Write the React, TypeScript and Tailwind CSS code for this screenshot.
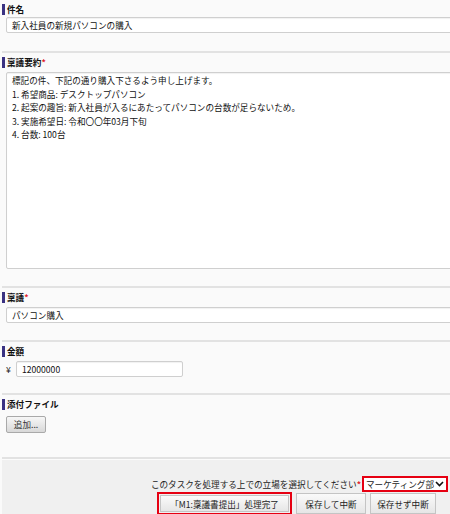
import React from 'react';

const font = { fontFamily: '"Noto Sans CJK JP", "Noto Sans", sans-serif' };

const Label = ({ text, required }: { text: string; required?: boolean }) => (
  <div className="flex items-center h-[12px]">
    <span className="w-[3px] h-[11px] bg-[#3a3282]" />
    <span className="ml-[2px] text-[8.6px] font-bold text-[#111] leading-[12px]">{text}</span>
    {required && <span className="text-[8.6px] font-bold text-[#e0202a] leading-[12px]">*</span>}
  </div>
);

const Section = ({ children, pb }: { children: React.ReactNode; pb: string }) => (
  <div className={`bg-[#fafafa] border-b-2 border-[#e2e2e2] pt-[3px] ${pb}`}>{children}</div>
);

const inputCls =
  'h-[16px] border border-[#cfcfcf] rounded-[2px] bg-white px-[5px] text-[8.6px] leading-[14px] text-[#111] shadow-[inset_0_1px_1px_rgba(0,0,0,0.06)]';

const body = [
  '標記の件、下記の通り購入下さるよう申し上げます。',
  '1. 希望商品: デスクトップパソコン',
  '2. 起案の趣旨: 新入社員が入るにあたってパソコンの台数が足らないため。',
  '3. 実施希望日: 令和〇〇年03月下旬',
  '4. 台数: 100台',
];

const btnCls =
  'flex items-center justify-center border border-[#c4c4c4] bg-gradient-to-b from-[#fafafa] to-[#e6e6e6] text-[8.6px] text-[#222] leading-[12px] whitespace-nowrap';

export default function App() {
  return (
    <div className="w-[450px] h-[514px] overflow-hidden bg-[#fafafa] pl-[2px] flex flex-col" style={font}>
      <Section pb="pb-[18px]">
        <Label text="件名" />
        <div className="flex pl-[4px] pt-[2px]">
          <div className={`${inputCls} w-[460px] shrink-0`}>新入社員の新規パソコンの購入</div>
        </div>
      </Section>

      <Section pb="pb-[17px]">
        <Label text="稟議要約" required />
        <div className="flex pl-[4px] pt-[4px]">
          <div className={`${inputCls} w-[460px] shrink-0 h-[197px] pt-[1px]`}>
            {body.map((l) => (
              <div key={l} className="leading-[13.5px] whitespace-nowrap">{l}</div>
            ))}
          </div>
        </div>
      </Section>

      <Section pb="pb-[17px]">
        <Label text="稟議" required />
        <div className="flex pl-[4px] pt-[4px]">
          <div className={`${inputCls} w-[460px] shrink-0`}>パソコン購入</div>
        </div>
      </Section>

      <Section pb="pb-[16px]">
        <Label text="金額" />
        <div className="pl-[4px] pt-[4px] flex items-center">
          <span className="text-[8.6px] leading-[12px] text-[#222] w-[10px]">¥</span>
          <div className={`${inputCls} w-[167px] h-[14px] leading-[12px]`}>12000000</div>
        </div>
      </Section>

      <Section pb="pb-[24px]">
        <Label text="添付ファイル" />
        <div className="flex pl-[4px] pt-[6px]">
          <button className="h-[17px] w-[40px] border border-[#a9a9a9] rounded-[2px] bg-gradient-to-b from-[#f7f7f7] to-[#d8d8d8] text-[8.6px] leading-[15px] text-[#333]">
            追加...
          </button>
        </div>
      </Section>

      <div className="bg-[#f0f0f0] flex-1 border-t border-[#fbfbfb] flex flex-col items-end pt-[16px] pr-[2px]">
        <div className="flex items-center h-[15px]">
          <span className="text-[8.6px] leading-[12px] text-[#222]">このタスクを処理する上での立場を選択してください</span>
          <span className="text-[8.6px] leading-[12px] text-[#e0202a] font-bold mr-[1px]">*</span>
          <div className="h-[16px] w-[86px] border-2 border-[#e60012] bg-white flex items-center pl-[2px] pr-[2px] text-[8.6px] text-[#222] leading-[12px]">
            <span className="flex-1 whitespace-nowrap">マーケティング部</span>
            <svg width="9" height="6" viewBox="0 0 9 6">
              <path d="M1 1 L4.5 4.5 L8 1" stroke="#111" strokeWidth="1.6" fill="none" />
            </svg>
          </div>
        </div>
        <div className="flex items-center gap-[4px] mt-[1px] pr-[12px]">
          <div className="flex border-2 border-[#e60012] p-[1px]">
            <button className={`${btnCls} h-[17px] w-[129px]`}>「M1:稟議書提出」処理完了</button>
          </div>
          <button className={`${btnCls} h-[21px] w-[70px]`}>保存して中断</button>
          <button className={`${btnCls} h-[21px] w-[66px]`}>保存せず中断</button>
        </div>
      </div>
    </div>
  );
}
